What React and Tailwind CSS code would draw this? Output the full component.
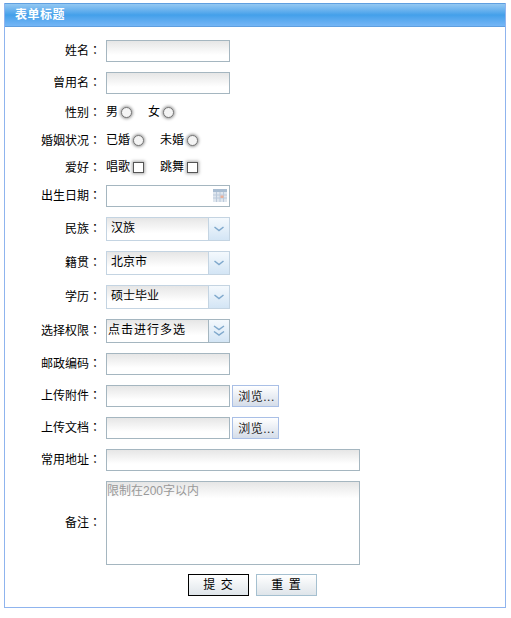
import React from "react";

const inputBox =
  "block h-[22px] border border-[#a5b6c0] bg-gradient-to-b from-[#e6e6e6] to-white to-70% outline-none";

const Label = ({ text, raised }) => (
  <label className={`w-[96px] shrink-0 text-right text-[12px] text-black ${raised ? "pb-[2px]" : ""}`}>
    {text}
    <span className="font-['Noto_Sans_CJK_TC']">：</span>
  </label>
);

const Row = ({ label, className = "mt-[10px]", raised = true, children }) => (
  <div className={`flex items-center gap-[5px] ${className}`}>
    <Label text={label} raised={raised} />
    {children}
  </div>
);

const Radio = () => (
  <span className="block h-[11px] w-[11px] rounded-full border border-[#777] bg-[#f4f4f4] shadow-[0_0_3px_1px_#999]"></span>
);

const Check = () => (
  <span className="block h-[11px] w-[11px] border border-[#555] bg-white shadow-[0_0_3px_1px_#aaa]"></span>
);

const Option = ({ text, children }) => (
  <span className="flex items-center gap-[3px] text-[12px]">
    {text}
    {children}
  </span>
);

const Chevron = ({ double }) => (
  <svg width="12" height="12" viewBox="0 0 12 12" fill="none" stroke="#7fa8cc" strokeWidth="1.5">
    {double ? (
      <>
        <path d="M1 1 L6 4.5 L11 1" />
        <path d="M1 6.5 L6 10 L11 6.5" />
      </>
    ) : (
      <path d="M1.5 4 L6 7.5 L10.5 4" />
    )}
  </svg>
);

const Select = ({ text, multi }) => (
  <div
    className={`flex h-[24px] w-[124px] items-stretch border ${
      multi ? "border-[#a5b6c0]" : "border-[#c4d4e2]"
    } bg-gradient-to-b from-[#e6e6e6] to-white to-70%`}
  >
    <span className={`flex-1 text-[12px] leading-[20px] ${multi ? "pl-[1px] tracking-[1px]" : "pl-1"}`}>
      {text}
    </span>
    <span
      className={`flex w-[21px] items-center justify-center border-l ${
        multi ? "border-[#a5b6c0]" : "border-[#c4d4e2]"
      } bg-gradient-to-b from-[#f4f9fd] to-[#d3e5f5]`}
    >
      <Chevron double={multi} />
    </span>
  </div>
);

const CalendarIcon = () => (
  <svg className="absolute right-[3px] top-[4px]" width="14" height="13" viewBox="0 0 14 13">
    <rect x="0" y="0" width="14" height="13" fill="#dfe6ee" />
    <rect x="0" y="0" width="14" height="3" fill="#a9bdd2" />
    <path d="M0 6 H14 M0 9 H14 M3.5 3 V13 M7 3 V13 M10.5 3 V13" stroke="#bccadb" strokeWidth="1" />
    <rect x="7.5" y="6.5" width="3" height="2.5" fill="#eab09a" />
  </svg>
);

const Browse = () => (
  <button className="ml-[-3px] h-[22px] w-[47px] border border-[#a9bfe6] bg-gradient-to-b from-white to-[#d5dde9] pl-[2px] pt-[1px] text-[12px] tracking-[0.5px] text-[#222]">
    浏览...
  </button>
);

export default function App() {
  return (
    <div className="bg-white h-[618px] pl-1 pt-[3px] font-['Liberation_Sans','Noto_Sans_CJK_SC',sans-serif] text-black">
      <div className="w-[502px] border border-t-0 border-[#8fb4ee] pb-[11px]">
        <div className="h-[24px] border-y border-[#5f9fe0] bg-gradient-to-b from-[#93c8f2] via-[#43a0ea] to-[#74b6f6] pl-[10px] text-[12px] font-bold leading-[23px] text-white tracking-[0.5px]">
          表单标题
        </div>

        <div className="pt-[13px]">
          <Row label="姓名" className="">
            <input className={`${inputBox} w-[124px]`} />
          </Row>
          <Row label="曾用名">
            <input className={`${inputBox} w-[124px]`} />
          </Row>
          <Row label="性别" className="mt-[8px] h-[20px]" raised={false}>
            <div className="flex gap-4">
              <Option text="男"><Radio /></Option>
              <Option text="女"><Radio /></Option>
            </div>
          </Row>
          <Row label="婚姻状况" className="mt-[8px] h-[20px]" raised={false}>
            <div className="flex gap-4">
              <Option text="已婚"><Radio /></Option>
              <Option text="未婚"><Radio /></Option>
            </div>
          </Row>
          <Row label="爱好" className="mt-[7px] h-[20px]" raised={false}>
            <div className="flex gap-4">
              <Option text="唱歌"><Check /></Option>
              <Option text="跳舞"><Check /></Option>
            </div>
          </Row>
          <Row label="出生日期" className="mt-[8px]">
            <div className="relative">
              <input className="block h-[22px] w-[124px] border border-[#a5b6c0] bg-white outline-none" />
              <CalendarIcon />
            </div>
          </Row>
          <Row label="民族">
            <Select text="汉族" />
          </Row>
          <Row label="籍贯">
            <Select text="北京市" />
          </Row>
          <Row label="学历">
            <Select text="硕士毕业" />
          </Row>
          <Row label="选择权限">
            <Select text="点击进行多选" multi />
          </Row>
          <Row label="邮政编码">
            <input className={`${inputBox} w-[124px]`} />
          </Row>
          <Row label="上传附件">
            <input className={`${inputBox} w-[124px]`} />
            <Browse />
          </Row>
          <Row label="上传文档">
            <input className={`${inputBox} w-[124px]`} />
            <Browse />
          </Row>
          <Row label="常用地址">
            <input className={`${inputBox} w-[254px]`} />
          </Row>
          <Row label="备注">
            <textarea
              className="block h-[84px] w-[254px] resize-none border border-[#a5b6c0] bg-gradient-to-b from-[#e6e6e6] to-white to-[20%] pt-[1px] text-[12px] leading-[16px] text-[#999] outline-none"
              defaultValue="限制在200字以内"
            />
          </Row>
          <div className="mt-[9px] flex gap-[7px] pl-[183px]">
            <button className="h-[22px] w-[61px] border border-black bg-gradient-to-b from-white to-[#dfe5ea] text-[12px] tracking-[1px]">
              提 交
            </button>
            <button className="h-[22px] w-[61px] border border-[#a5c0d0] bg-gradient-to-b from-white to-[#dfe5ea] text-[12px] tracking-[1px]">
              重 置
            </button>
          </div>
        </div>
      </div>
    </div>
  );
}
